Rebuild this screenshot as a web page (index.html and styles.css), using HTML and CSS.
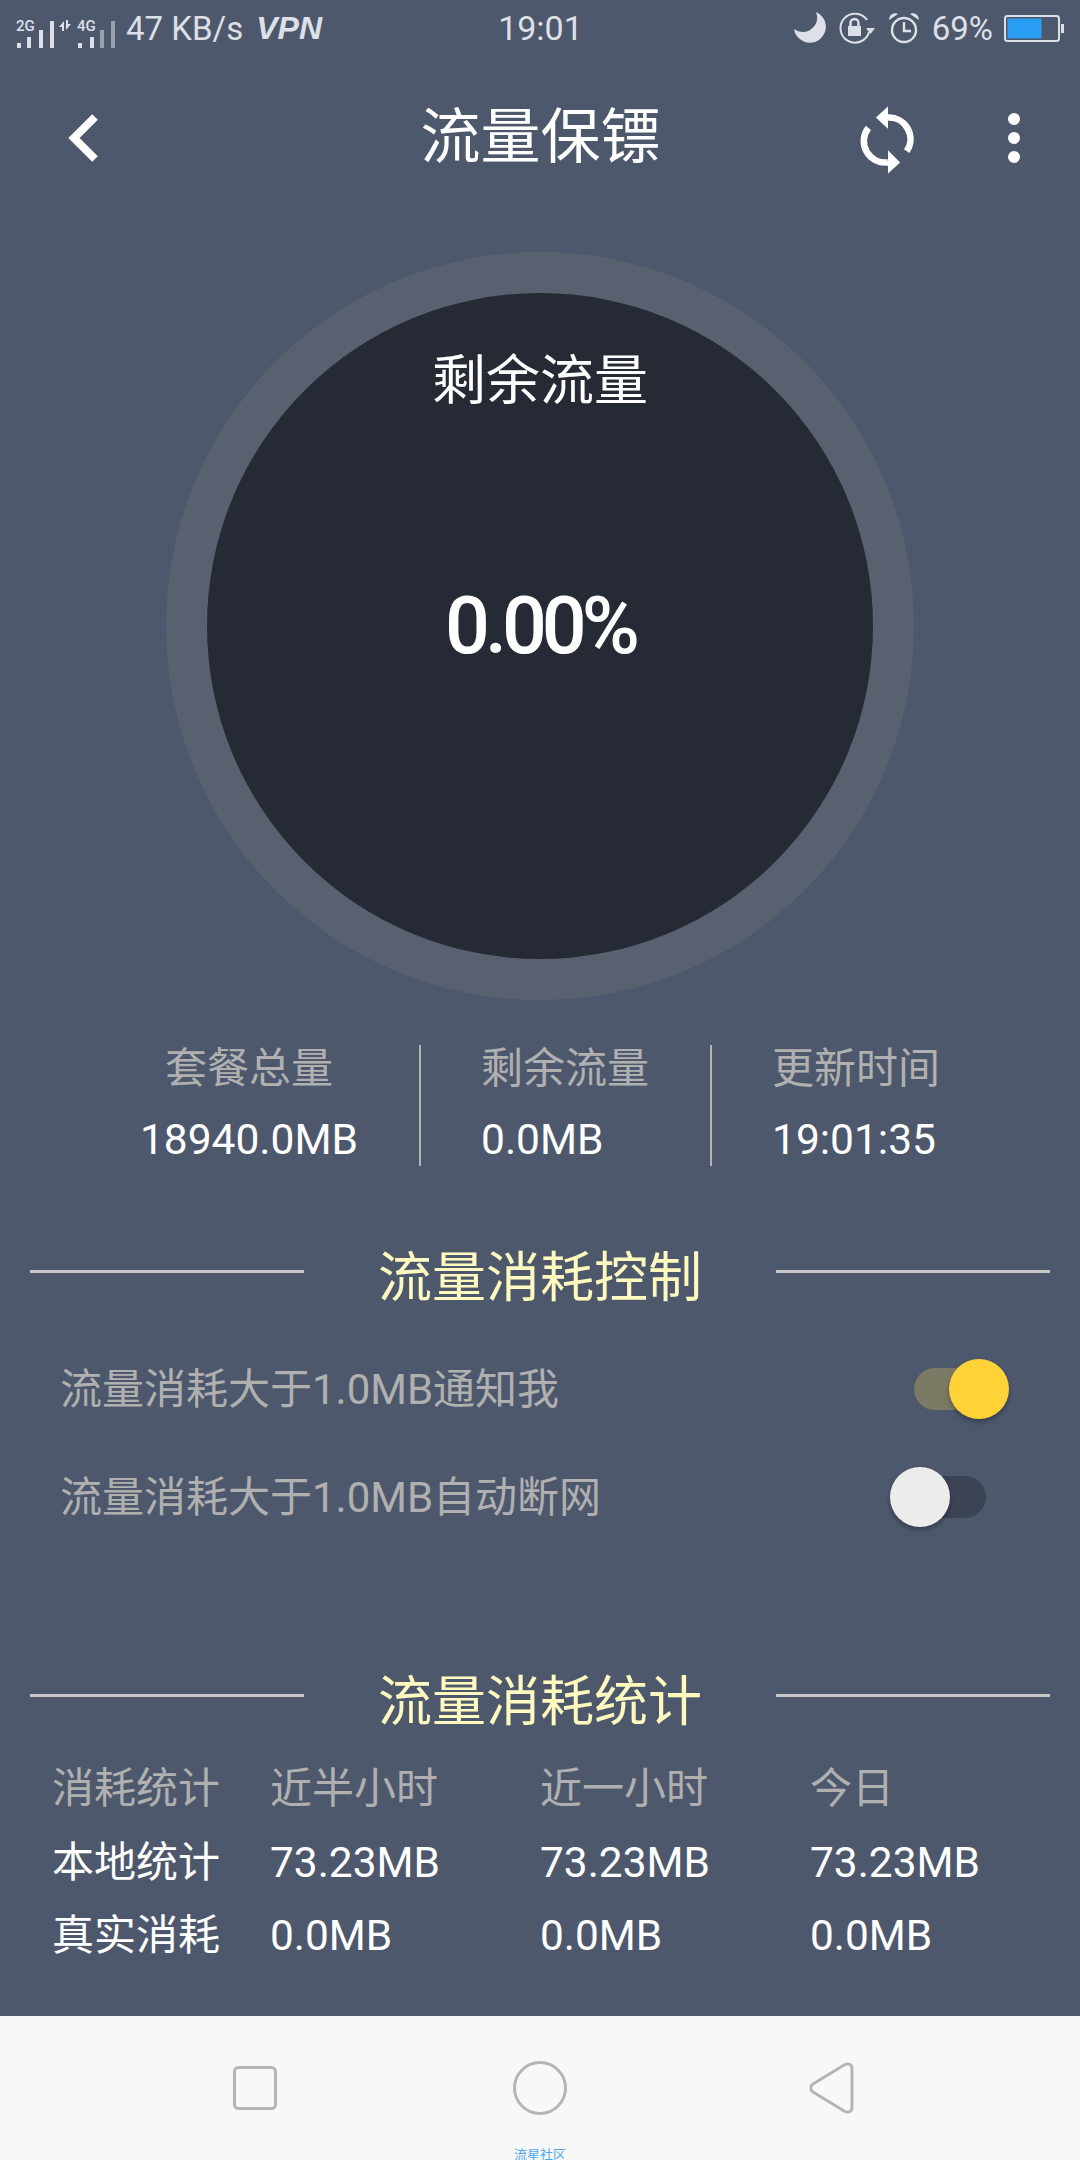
FILE: index.html
```html
<!DOCTYPE html>
<html lang="zh">
<head>
<meta charset="utf-8">
<title>流量保镖</title>
<link rel="stylesheet" href="styles.css">
</head>
<body>
<main class="screen">
  <div class="status">
    <div class="status-left">
      <svg class="signal" width="100" height="40" viewBox="0 0 100 40">
        <text x="0" y="23" class="sig-label">2G</text>
        <g fill="#dde0e6">
          <rect x="1" y="35" width="4" height="5"/><rect x="11" y="29" width="4" height="11"/><rect x="23" y="22" width="4" height="18"/><rect x="34" y="13" width="4" height="27"/>
          <path d="M48 23V13l-5 6h3v4zM50 12v10l5-6h-3v-4z"/>
        </g>
        <text x="61" y="23" class="sig-label">4G</text>
        <g fill="#dde0e6">
          <rect x="62" y="35" width="4" height="5"/><rect x="74" y="29" width="4" height="11"/>
        </g>
        <g fill="#9aa0ad">
          <rect x="84" y="22" width="4" height="18"/><rect x="95" y="13" width="4" height="27"/>
        </g>
      </svg>
      <span class="speed">47 KB/s</span>
      <span class="vpn">VPN</span>
    </div>
    <div class="clock">19:01</div>
    <div class="status-right">
      <svg width="32" height="32" viewBox="0 0 32 32"><path d="M22 0A16 16 0 1 1 0 17c4 3 10 4 14 2C22 15 25 8 22 0z" fill="#dde0e6"/></svg>
      <svg width="38" height="32" viewBox="0 0 38 32">
        <path d="M31 20A14.500 14.500 0 1 1 29 8" fill="none" stroke="#dde0e6" stroke-width="2"/>
        <path d="M28 16l9 0-4.500 6z" fill="#dde0e6"/>
        <path d="M10 14h13v10H10z" fill="#dde0e6"/>
        <path d="M12.500 14v-3a4 4 0 0 1 8 0v3" fill="none" stroke="#dde0e6" stroke-width="2.400"/>
      </svg>
      <svg width="32" height="32" viewBox="0 0 32 32">
        <circle cx="16" cy="18" r="12" fill="none" stroke="#dde0e6" stroke-width="2.400"/>
        <path d="M16 10v9h7" fill="none" stroke="#dde0e6" stroke-width="2.400"/>
        <path d="M1 8c0-5 5-8 9-6zM31 8c0-5-5-8-9-6z" fill="#dde0e6"/>
      </svg>
      <span class="battery-pct">69%</span>
      <svg width="61" height="27" viewBox="0 0 61 27">
        <rect x="1" y="1" width="54" height="25" rx="2.500" fill="none" stroke="#dde0e6" stroke-width="2"/>
        <rect x="3.500" y="3.500" width="34" height="20" fill="#2a9df4"/>
        <rect x="57" y="9" width="3" height="9" fill="#dde0e6"/>
      </svg>
    </div>
  </div>

  <header class="topbar">
    <div class="topbar-left">
      <svg width="48" height="56" viewBox="0 0 48 56"><path d="M34 7L13 28l21 21" fill="none" stroke="#fff" stroke-width="8"/></svg>
    </div>
    <h1 class="title">流量保镖</h1>
    <div class="topbar-right">
      <svg class="refresh" width="56" height="72" viewBox="0 0 60 76">
        <g fill="none" stroke="#fff" stroke-width="7">
          <path d="M30 14A23 23 0 0 1 50 50"/>
          <path d="M30 62A23 23 0 0 1 9 25"/>
        </g>
        <path d="M30 2L17 14l13 12zM30 49l13 13-13 12z" fill="#fff"/>
      </svg>
      <svg class="dots" width="12" height="50" viewBox="0 0 12 50"><circle cx="6" cy="6" r="6" fill="#fff"/><circle cx="6" cy="25" r="6" fill="#fff"/><circle cx="6" cy="44" r="6" fill="#fff"/></svg>
    </div>
  </header>

  <section class="ring">
    <div class="disc">
      <div class="disc-label">剩余流量</div>
      <div class="disc-value">0.00%</div>
    </div>
  </section>

  <section class="summary">
    <div class="cell cell-first"><span class="cell-label">套餐总量</span><span class="cell-value">18940.0MB</span></div>
    <div class="cell cell-rest"><span class="cell-label">剩余流量</span><span class="cell-value">0.0MB</span></div>
    <div class="cell cell-rest"><span class="cell-label">更新时间</span><span class="cell-value">19:01:35</span></div>
  </section>

  <div class="section-head head-control"><span class="rule"></span><h2 class="section-title">流量消耗控制</h2><span class="rule"></span></div>

  <div class="option"><span class="option-text">流量消耗大于1.0MB通知我</span><span class="switch switch-on"><span class="knob"></span></span></div>
  <div class="option"><span class="option-text">流量消耗大于1.0MB自动断网</span><span class="switch switch-off"><span class="knob"></span></span></div>

  <div class="section-head head-stats"><span class="rule"></span><h2 class="section-title">流量消耗统计</h2><span class="rule"></span></div>

  <div class="table">
    <span class="cjk muted">消耗统计</span><span class="cjk muted">近半小时</span><span class="cjk muted">近一小时</span><span class="cjk muted">今日</span>
    <span class="cjk">本地统计</span><span class="num">73.23MB</span><span class="num">73.23MB</span><span class="num">73.23MB</span>
    <span class="cjk">真实消耗</span><span class="num">0.0MB</span><span class="num">0.0MB</span><span class="num">0.0MB</span>
  </div>
</main>

<footer class="navbar">
  <div class="nav-icons">
    <svg width="44" height="44" viewBox="0 0 44 44"><rect x="1.500" y="1.500" width="41" height="41" rx="4" fill="none" stroke="#b5b5b5" stroke-width="3"/></svg>
    <svg width="54" height="54" viewBox="0 0 54 54"><circle cx="27" cy="27" r="25.500" fill="none" stroke="#b5b5b5" stroke-width="3"/></svg>
    <svg width="46" height="52" viewBox="0 0 46 52"><path d="M5 22L37 2.500c3-1.500 7 0 7 4v39c0 4-4 5.500-7 4L5 30c-3-2-3-6 0-8z" fill="none" stroke="#b5b5b5" stroke-width="3"/></svg>
  </div>
  <div class="watermark">流星社区</div>
</footer>
</body>
</html>
```
FILE: styles.css
```css
* { box-sizing: border-box; }
html, body { margin: 0; padding: 0; }
body {
  width: 1080px;
  height: 2160px;
  overflow: hidden;
  background: #4e586d;
  color: #fff;
  font-family: Roboto, "Noto Sans CJK SC", sans-serif;
}
.screen { height: 2016px; display: flex; flex-direction: column; }

.status {
  height: 56px;
  display: grid;
  grid-template-columns: 1fr auto 1fr;
  align-items: center;
  padding: 0 15px 0 16px;
  color: #dde0e6;
  font-size: 33px;
}
.status-left { display: flex; align-items: center; height: 56px; }
.signal { margin-right: 10px; }
.sig-label { font-family: Roboto, sans-serif; font-size: 15px; font-weight: 500; fill: #dde0e6; }
.speed { font-family: Roboto, sans-serif; }
.vpn { font-family: "Liberation Sans", sans-serif; font-weight: 700; font-style: italic; font-size: 32px; margin-left: 13px; }
.clock { font-size: 34px; }
.status-right { display: flex; align-items: center; justify-content: flex-end; gap: 12px; }
.battery-pct { font-size: 33px; margin-right: -1px; }

.topbar {
  height: 164px;
  display: grid;
  grid-template-columns: 1fr auto 1fr;
  align-items: center;
  padding: 0 60px 0 61px;
}
.topbar-left { display: flex; align-items: center; }
.title { margin: 0; font-size: 60px; font-weight: 400; line-height: 80px; }
.topbar-right { display: flex; align-items: center; justify-content: flex-end; gap: 92px; }
.refresh { margin-top: 3px; }

.ring {
  width: 748px;
  height: 748px;
  margin: 32px 0 0 166px;
  border-radius: 50%;
  background: #596070;
  padding: 41px;
}
.disc {
  width: 100%;
  height: 100%;
  border-radius: 50%;
  background: #262a35;
  display: flex;
  flex-direction: column;
  align-items: center;
  padding-top: 50px;
}
.disc-label { font-size: 54px; line-height: 78px; }
.disc-value { font-size: 79px; font-weight: 500; letter-spacing: -5px; line-height: 90px; margin-top: 160px; }

.summary {
  margin-top: 45px;
  height: 121px;
  display: grid;
  grid-template-columns: 419px 291px 1fr;
}
.cell { display: flex; flex-direction: column; justify-content: space-between; font-size: 42px; line-height: 52px; }
.cell-first { align-items: center; padding-left: 79px; }
.cell-rest { align-items: flex-start; padding-left: 60px; border-left: 2px solid #b4b4b4; }
.cell-label { color: #b0b0b0; margin-top: -2px; }
.cell-value { color: #fff; font-size: 42.500px; }

.section-head {
  height: 60px;
  display: grid;
  grid-template-columns: 274px 1fr 274px;
  align-items: center;
  padding: 0 30px;
}
.head-control { margin-top: 83px; }
.head-stats { margin-top: 122px; }
.section-title { margin: 0; text-align: center; font-size: 54px; font-weight: 400; line-height: 60px; color: #fdf9bf; }
.rule { height: 3px; background: #c8c8c8; margin-top: -16px; }

.head-control + .option { margin-top: 26px; }
.option {
  height: 108px;
  display: flex;
  align-items: center;
  justify-content: space-between;
  padding: 0 0 0 60px;
  font-size: 42px;
  color: #b0b0b0;
}
.option-text { margin-top: -8px; }
.switch { position: relative; display: block; width: 86px; height: 42px; border-radius: 21px; }
.switch-on { background: #7b7a65; margin-right: 80px; }
.switch-off { background: #3c4355; margin-right: 94px; }
.knob { position: absolute; top: -9px; width: 60px; height: 60px; border-radius: 50%; box-shadow: 0 3px 5px rgba(0,0,0,.3); }
.switch-on .knob { right: -9px; background: #ffd338; }
.switch-off .knob { left: -10px; background: #ececec; }

.table {
  margin-top: 19px;
  padding-left: 52px;
  display: grid;
  grid-template-columns: 218px 270px 270px 1fr;
  grid-auto-rows: 73.500px;
  align-items: center;
  font-size: 42px;
}
.cjk { padding-bottom: 8px; }
.num { font-size: 42.400px; }
.muted { color: #b0b0b0; }

.navbar { position: relative; height: 144px; background: #f8f8f8; }
.nav-icons {
  height: 144px;
  display: grid;
  grid-template-columns: 280px 295px 46px;
  align-items: center;
  padding-left: 233px;
}
.watermark { position: absolute; left: 0; right: 0; bottom: 0; text-align: center; font-size: 13px; line-height: 12px; color: #4ea8f5; font-family: "Noto Sans CJK SC", sans-serif; }
```
